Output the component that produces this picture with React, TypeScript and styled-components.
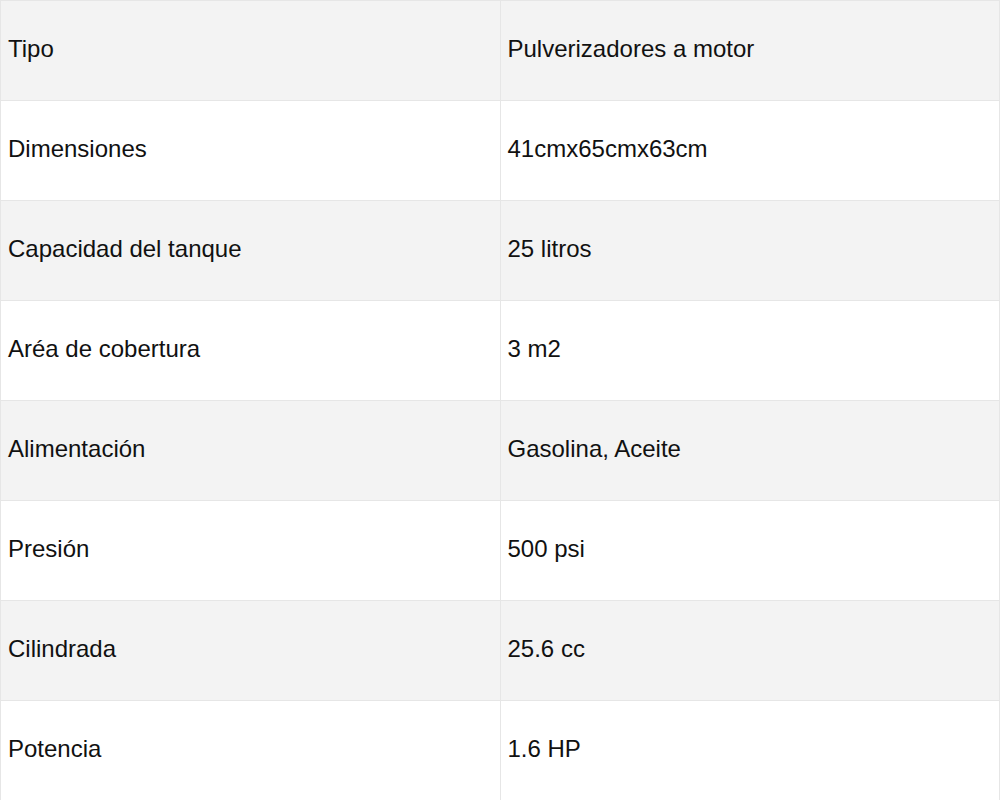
import React from "react";
import styled, { createGlobalStyle } from "styled-components";

const Global = createGlobalStyle`
  html, body { margin: 0; padding: 0; background: #fff; }
  body { font-family: "Liberation Sans", Arial, sans-serif; }
`;

const Table = styled.table`
  width: 1000px;
  border-collapse: collapse;
  table-layout: fixed;
  font-family: "Liberation Sans", Arial, sans-serif;
  font-size: 24px;
  color: #111;
`;

const Row = styled.tr<{ $shade: boolean }>`
  height: 100px;
  background: ${(p) => (p.$shade ? "#f3f3f3" : "#ffffff")};
`;

const Cell = styled.td`
  border: 1px solid #e6e6e6;
  padding: 0 7px 4px;
  vertical-align: middle;
  width: 50%;
`;

const data: [string, string][] = [
  ["Tipo", "Pulverizadores a motor"],
  ["Dimensiones", "41cmx65cmx63cm"],
  ["Capacidad del tanque", "25 litros"],
  ["Aréa de cobertura", "3 m2"],
  ["Alimentación", "Gasolina, Aceite"],
  ["Presión", "500 psi"],
  ["Cilindrada", "25.6 cc"],
  ["Potencia", "1.6 HP"],
];

export default function App() {
  return (
    <>
      <Global />
      <Table>
        <tbody>
          {data.map(([k, v], i) => (
            <Row key={k} $shade={i % 2 === 0}>
              <Cell>{k}</Cell>
              <Cell>{v}</Cell>
            </Row>
          ))}
        </tbody>
      </Table>
    </>
  );
}
